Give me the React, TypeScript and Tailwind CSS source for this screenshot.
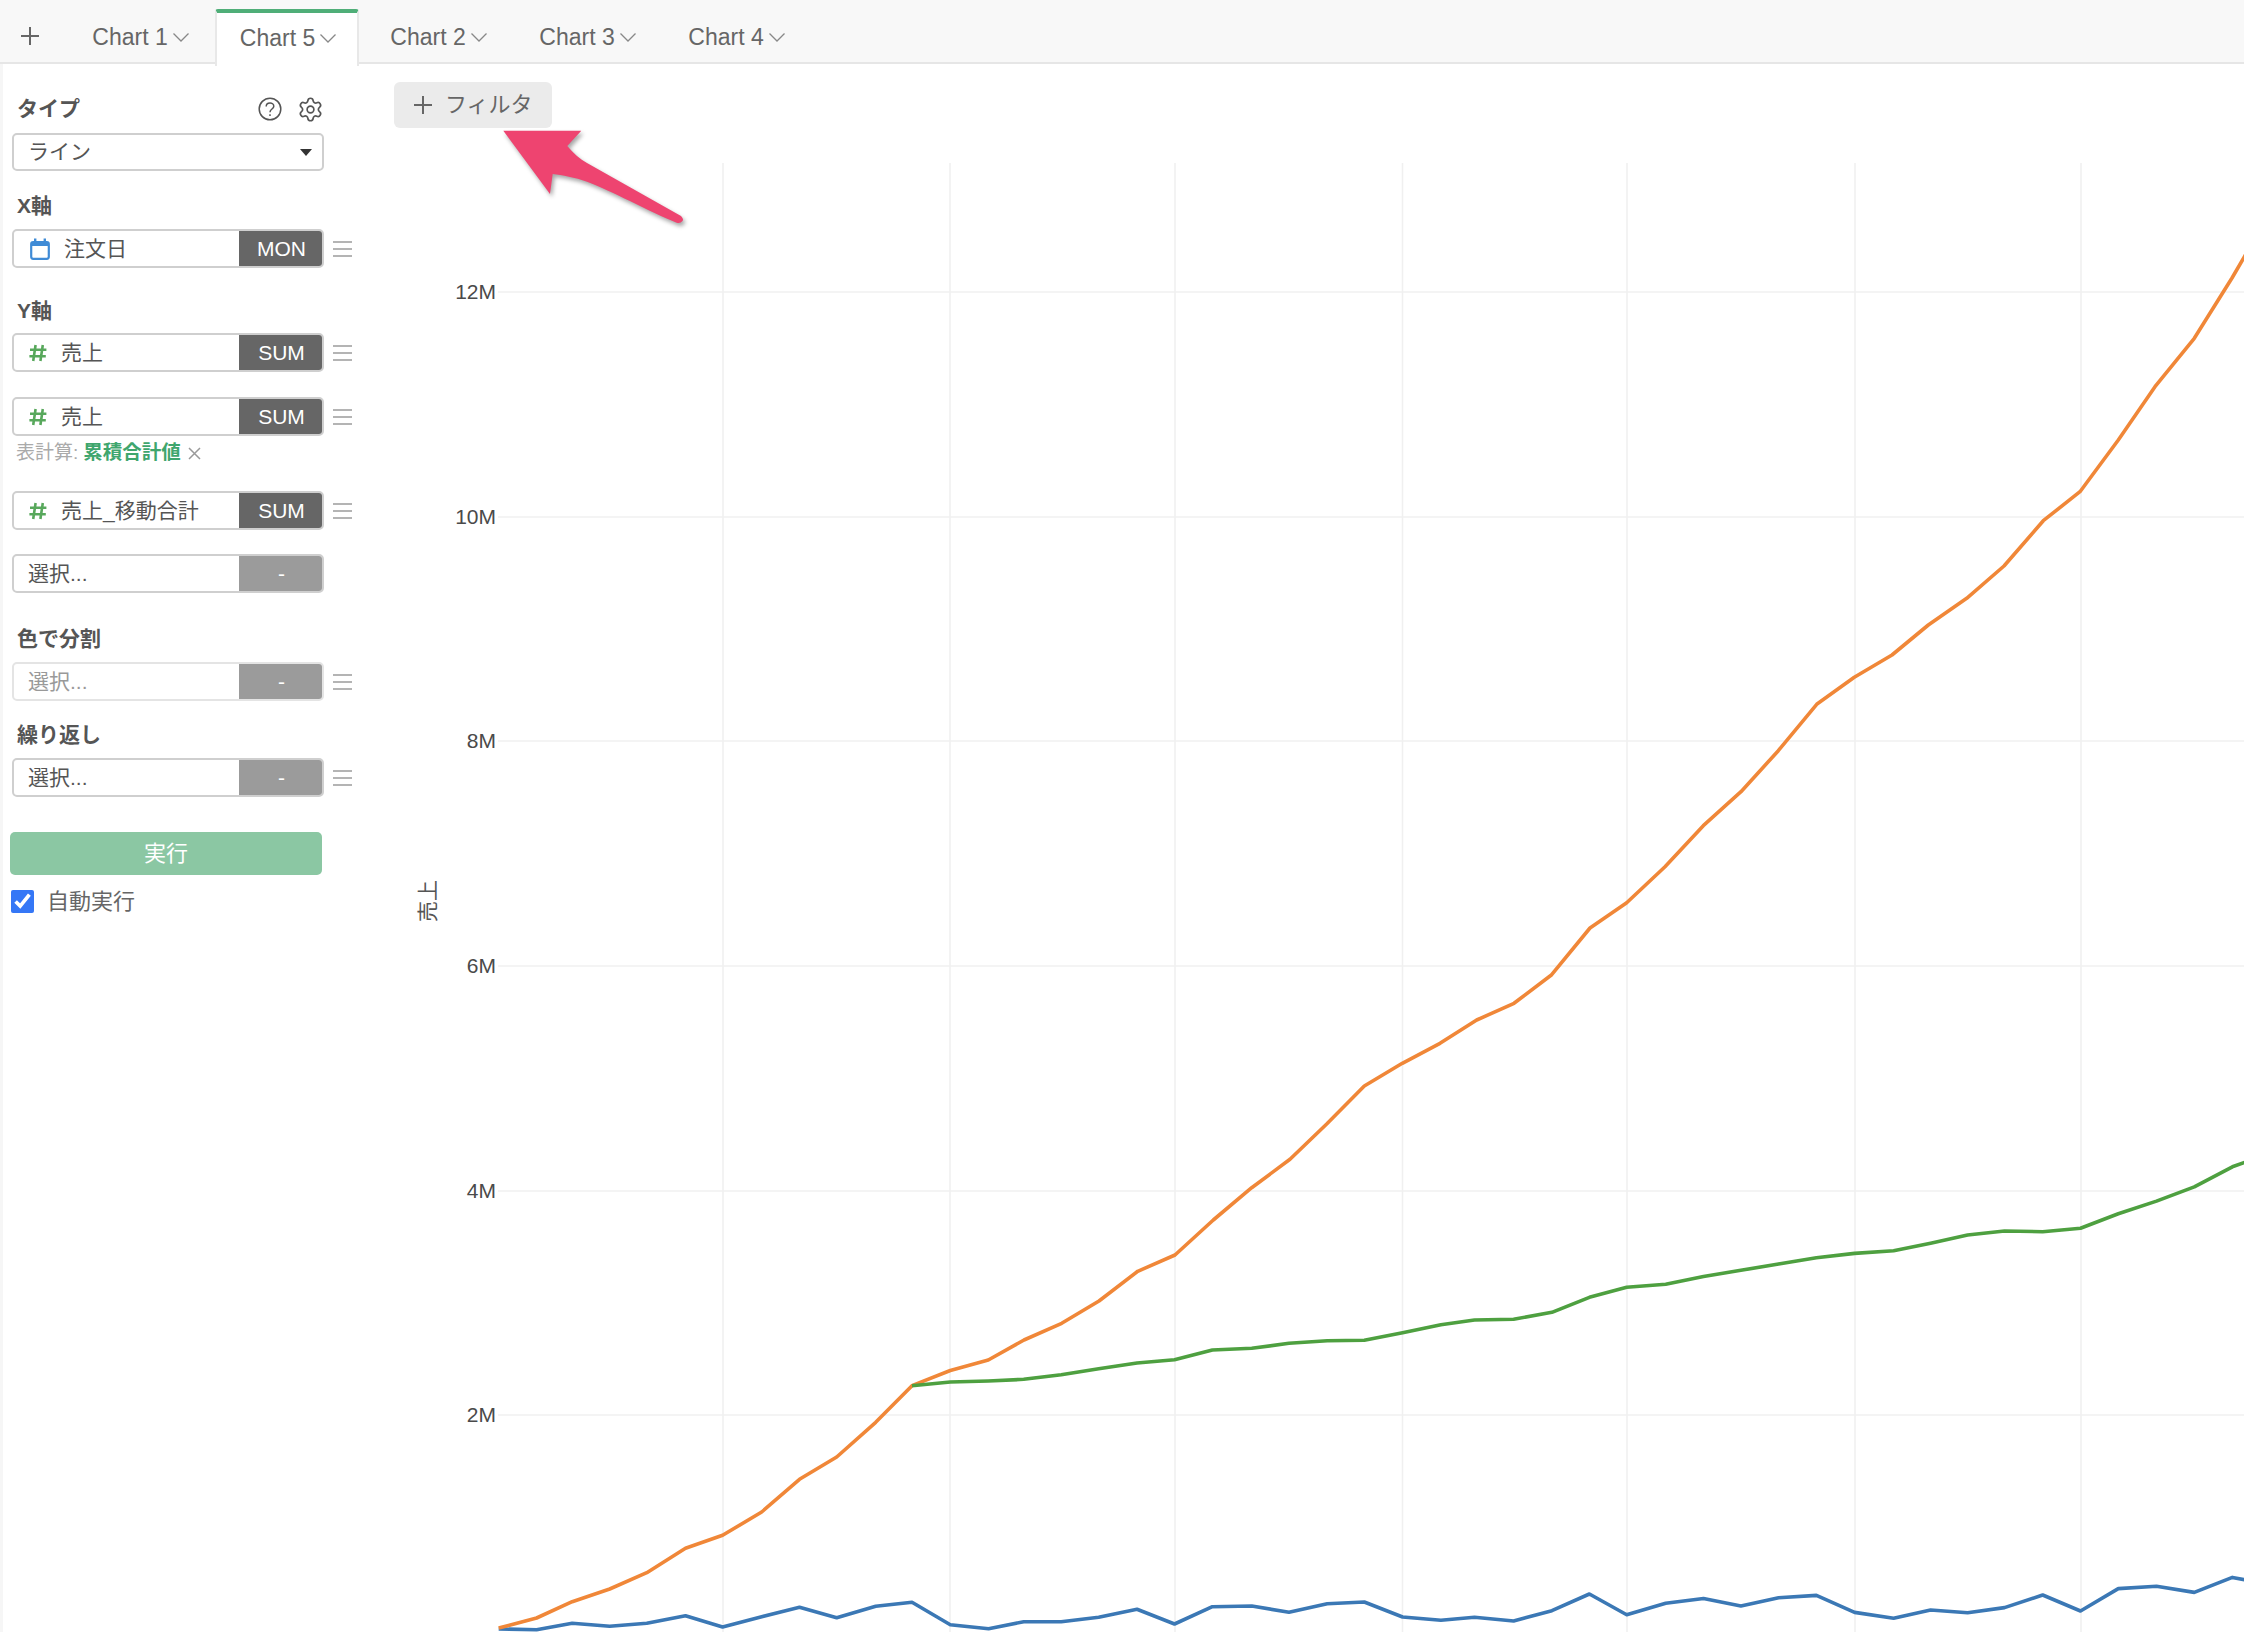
import { Settings } from "lucide-react";
import type { ReactNode } from "react";

const orange =
    "498.7,1628 536.6,1618 572.2,1601.7 609.7,1589 646.8,1572.7 685.5,1548.3 722.6,1535.3 761.7,1512 799.5,1479.3 836.7,1457 875.7,1422.3 912,1385.7 950.3,1370.5 988.3,1360 1024,1340 1061.7,1323.3 1099,1301 1137.7,1271.3 1175,1255 1213.3,1220 1251.7,1187.7 1290,1159.3 1326.7,1124 1364.3,1086 1402.3,1063.3 1440,1043.3 1476.7,1020 1514,1003.3 1551.7,974.7 1590,928 1626.7,902.7 1665,866.7 1703.3,825.7 1741,791.7 1778.3,750.7 1816.7,704.3 1854.3,677.3 1892,655 1928.3,625 1966.7,598.3 2004,566 2043.3,520.7 2080,491.7 2118.3,440 2155,386.7 2194.3,338.3 2232,278 2246,254";

const green =
    "912,1385.7 950.3,1382 988.3,1381 1023.7,1379.3 1061.2,1374.7 1098.7,1368.7 1137,1363 1174.5,1359.7 1212.4,1350 1251.8,1348.3 1289,1343.3 1327.2,1340.7 1364.3,1340.3 1402.6,1332.7 1440.9,1324.7 1474.5,1320 1513.6,1319.3 1551.9,1312.3 1589.4,1297.3 1626.7,1287.3 1665.7,1284.3 1703.5,1276.5 1740.9,1270.3 1778.6,1263.9 1816.4,1257.8 1854.6,1253.4 1893.6,1250.7 1930.6,1243.2 1967.6,1235 2004.5,1231 2042.7,1231.7 2080.5,1228.3 2118.3,1213.7 2156.5,1201.1 2194.3,1186.9 2232.4,1166.8 2246,1162";

const blue =
    "498.7,1629 536.6,1629.7 572.2,1623.3 609.7,1626.3 646.8,1623.3 685.5,1615.7 722.6,1627 761.7,1616.7 799.5,1607.3 836.7,1617.7 875.7,1606.3 912,1602.3 950.3,1624.7 988.6,1628.7 1023.7,1621.7 1061.2,1621.7 1098.7,1617.3 1137,1609.3 1174.5,1624 1212.4,1606.7 1251.8,1606 1289,1612.3 1327.2,1603.7 1364.3,1602 1402.6,1617 1440.9,1620.3 1474.5,1617.3 1513.6,1621 1551.9,1610.7 1589.4,1594 1626.7,1614.8 1665.7,1603.2 1703.5,1598.5 1740.9,1606 1778.6,1597.8 1816.4,1595.4 1854.6,1612.4 1893.6,1618.2 1930.6,1610 1967.6,1612.7 2004.5,1607.6 2042.7,1595 2080.5,1611 2118.3,1588.6 2156.5,1586.3 2194.3,1592.4 2232.4,1577.4 2246,1580";

const yTicks = [
    { label: "12M", y: 292 },
    { label: "10M", y: 517 },
    { label: "8M", y: 741 },
    { label: "6M", y: 966 },
    { label: "4M", y: 1191 },
    { label: "2M", y: 1415 },
];

const xTicks = [723, 950, 1175, 1402.5, 1627, 1855, 2081];

function Chevron() {
    return (
        <svg width="16" height="9" viewBox="0 0 16 9" fill="none" stroke="#888" strokeWidth="1.3">
            <path d="M0.5 0.5 L8 8 L15.5 0.5" />
        </svg>
    );
}

function Tab({ name, active }: { name: string; active?: boolean }) {
    if (active) {
        return (
            <div className="flex w-[144px] h-[57px] mt-[9px] mr-[5px] -mb-[2px] items-center justify-center gap-[5px] pl-[2px] pb-[3px] bg-white border-t-[4px] border-t-[#4fae78] border-x-2 border-x-[#e8e8e8] rounded-t-[3px] text-[23px] text-[#666]">
                {name}
                <Chevron />
            </div>
        );
    }
    return (
        <div className="flex w-[149px] items-center justify-center gap-[5px] pt-[12px] text-[23px] text-[#666]">
            {name}
            <Chevron />
        </div>
    );
}

function Heading({ children, className }: { children: ReactNode; className: string }) {
    return (
        <div className={`flex h-[28px] items-center pl-[5px] text-[21px] font-bold text-[#555] ${className}`}>
            {children}
        </div>
    );
}

function Handle() {
    return (
        <div className="flex w-[19px] ml-[9px] flex-col gap-[5px]">
            <div className="h-[2px] bg-[#b4b4b4]" />
            <div className="h-[2px] bg-[#b4b4b4]" />
            <div className="h-[2px] bg-[#b4b4b4]" />
        </div>
    );
}

function CalendarIcon() {
    return (
        <svg width="20" height="22" viewBox="0 0 20 22" className="ml-[16px] mr-[14px] shrink-0">
            <rect x="1.2" y="4" width="17.6" height="16.8" rx="2" fill="none" stroke="#3f8bd6" strokeWidth="2.2" />
            <rect x="1" y="4" width="18" height="4" fill="#3f8bd6" />
            <rect x="4" y="0.5" width="2.4" height="5" fill="#3f8bd6" />
            <rect x="13.6" y="0.5" width="2.4" height="5" fill="#3f8bd6" />
        </svg>
    );
}

function Hash() {
    return (
        <svg width="18" height="18" viewBox="0 0 18 18" className="ml-[15px] mr-[14px] shrink-0" stroke="#58a85c" strokeWidth="2.6">
            <path d="M6.6 1 L4.2 17 M13.8 1 L11.4 17 M1 5.8 H17.4 M0.4 12.2 H16.8" />
        </svg>
    );
}

function FieldRow({
    icon,
    label,
    badge = "-",
    muted,
    handle = true,
    className,
}: {
    icon?: ReactNode;
    label: string;
    badge?: string;
    muted?: boolean;
    handle?: boolean;
    className: string;
}) {
    const off = badge === "-";
    return (
        <div className={`flex items-center ${className}`}>
            <div
                className={`flex w-[312px] h-[39px] rounded-[5px] border-2 overflow-hidden bg-white ${
                    muted ? "border-[#e4e4e4]" : "border-[#cfcfcf]"
                }`}
            >
                <div
                    className={`flex flex-1 items-center text-[21px] whitespace-nowrap ${
                        icon ? "" : "pl-[14px]"
                    } ${muted ? "text-[#999]" : "text-[#555]"}`}
                >
                    {icon}
                    {label}
                </div>
                <div
                    className={`flex w-[85px] -my-[2px] -mr-[2px] items-center justify-center text-[21px] text-white ${
                        off ? "bg-[#9b9b9b]" : "bg-[#666]"
                    }`}
                >
                    {badge}
                </div>
            </div>
            {handle && <Handle />}
        </div>
    );
}

function Sidebar() {
    return (
        <aside className="w-[370px] shrink-0 border-l-[3px] border-[#f6f6f6] pl-[9px]">
            <div className="flex w-[312px] h-[28px] mt-[31px] items-center justify-between">
                <span className="pl-[5px] text-[21px] font-bold text-[#555]">タイプ</span>
                <div className="flex items-center gap-[15px]">
                    <svg width="24" height="24" viewBox="0 0 24 24" fill="none" stroke="#555" strokeWidth="1.5">
                        <circle cx="12" cy="12" r="10.8" />
                        <path d="M8.2 9.4 C8.2 4.8 15.8 4.8 15.8 9.2 C15.8 12 12 12 12 15.2" />
                        <path d="M12 17.2 V19" />
                    </svg>
                    <Settings size={27} strokeWidth={1.5} color="#555" />
                </div>
            </div>
            <div className="flex w-[312px] h-[38px] mt-[10px] items-center justify-between rounded-[5px] border-2 border-[#cfcfcf] pl-[14px] pr-[10px] text-[21px] text-[#555]">
                ライン
                <span className="w-0 h-0 border-x-[6px] border-x-transparent border-t-[7px] border-t-[#333]" />
            </div>

            <Heading className="mt-[21px]">X軸</Heading>
            <FieldRow className="mt-[9px]" icon={<CalendarIcon />} label="注文日" badge="MON" />

            <Heading className="mt-[29px]">Y軸</Heading>
            <FieldRow className="mt-[8px]" icon={<Hash />} label="売上" badge="SUM" />
            <FieldRow className="mt-[25px]" icon={<Hash />} label="売上" badge="SUM" />
            <div className="flex h-[24px] mt-[5px] items-center pl-[4px] text-[19px] text-[#aaa]">
                表計算:
                <span className="ml-[5px] text-[19.5px] font-bold text-[#3fa66e]">累積合計値</span>
                <svg width="13" height="13" viewBox="0 0 13 13" className="ml-[7px]" stroke="#999" strokeWidth="1.5">
                    <path d="M1 1 L12 12 M12 1 L1 12" />
                </svg>
            </div>
            <FieldRow className="mt-[26px]" icon={<Hash />} label="売上_移動合計" badge="SUM" />
            <FieldRow className="mt-[24px]" label="選択..." handle={false} />

            <Heading className="mt-[32px]">色で分割</Heading>
            <FieldRow className="mt-[9px]" label="選択..." muted />

            <Heading className="mt-[20px]">繰り返し</Heading>
            <FieldRow className="mt-[9px]" label="選択..." />

            <div className="flex w-[312px] h-[43px] mt-[35px] -ml-[2px] items-center justify-center rounded-[5px] bg-[#8bc7a3] text-[22px] text-white">
                実行
            </div>
            <label className="flex h-[23px] mt-[15px] -ml-[1px] items-center gap-[13px] text-[22px] text-[#666]">
                <input type="checkbox" defaultChecked className="w-[23px] h-[23px] accent-[#3577f6]" />
                自動実行
            </label>
        </aside>
    );
}

function Chart() {
    return (
        <svg viewBox="370 140 1874 1492" className="block w-[1874px] h-[1492px]">
            {xTicks.map((x) => (
                <line key={x} x1={x} x2={x} y1="163" y2="1632" stroke="#f0f0f0" strokeWidth="1.6" />
            ))}
            {yTicks.map((t) => (
                <g key={t.label}>
                    <line x1="498" x2="2244" y1={t.y} y2={t.y} stroke="#f0f0f0" strokeWidth="1.6" />
                    <text x="496" y={t.y + 7} textAnchor="end" fontSize="21" fill="#4a4a4a">
                        {t.label}
                    </text>
                </g>
            ))}
            <text x="0" y="0" transform="translate(435 901) rotate(-90)" textAnchor="middle" fontSize="21" fill="#555">
                売上
            </text>
            <polyline points={blue} fill="none" stroke="#3b78b5" strokeWidth="3.6" strokeLinejoin="round" />
            <polyline points={orange} fill="none" stroke="#f08738" strokeWidth="3.6" strokeLinejoin="round" />
            <polyline points={green} fill="none" stroke="#4ea040" strokeWidth="3.6" strokeLinejoin="round" />
        </svg>
    );
}

export default function App() {
    return (
        <div className="flex flex-col w-[2244px] h-[1632px] overflow-hidden bg-white font-['Liberation_Sans','Noto_Sans_CJK_JP',sans-serif]">
            <header className="flex h-[64px] shrink-0 border-b-2 border-[#e6e6e6] bg-[#f8f8f8]">
                <div className="flex w-[66px] items-center justify-center pr-[6px] pt-[9px]">
                    <svg width="20" height="20" viewBox="0 0 20 20" stroke="#666" strokeWidth="2">
                        <path d="M10 1 V19 M1 10 H19" />
                    </svg>
                </div>
                <Tab name="Chart 1" />
                <Tab name="Chart 5" active />
                <Tab name="Chart 2" />
                <Tab name="Chart 3" />
                <Tab name="Chart 4" />
            </header>

            <div className="flex flex-1 min-h-0">
                <Sidebar />
                <main className="relative flex-1 min-w-0">
                    <div className="flex w-[158px] h-[46px] mt-[18px] mb-[12px] ml-[24px] items-center rounded-[6px] bg-[#ebebeb] pl-[20px] pb-[1px] text-[22px] text-[#666]">
                        <svg width="18" height="18" viewBox="0 0 18 18" stroke="#666" strokeWidth="2" className="mr-[13px]">
                            <path d="M9 0 V18 M0 9 H18" />
                        </svg>
                        フィルタ
                    </div>
                    <Chart />
                    <svg
                        viewBox="495 125 195 105"
                        className="absolute left-[125px] top-[61px] w-[195px] h-[105px] overflow-visible drop-shadow-[2px_3px_2px_rgba(0,0,0,0.35)]"
                    >
                        <path
                            d="M503.3 130.7 L581.3 130.7 L567.3 146 C573 153 580 159 587 163 L681 216 Q684 219 682.5 221 Q680 224 676.7 222.7 C650 212 610 190 587 181.7 C575 177.5 562 175 552.7 174 L550 194 Z"
                            fill="#ee4470"
                        />
                    </svg>
                </main>
            </div>
        </div>
    );
}
